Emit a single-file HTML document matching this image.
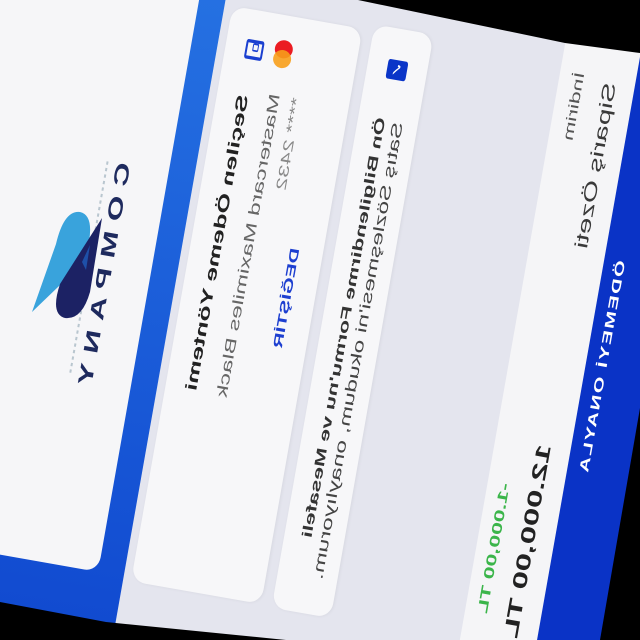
<!DOCTYPE html>
<html><head><meta charset="utf-8"><style>
html,body{margin:0;padding:0;width:640px;height:640px;overflow:hidden;background:#000;font-family:"Liberation Sans",sans-serif;}
#wrap{position:fixed;left:0;top:0;width:640px;height:640px;overflow:hidden;contain:paint;background:#000;}
#pg{position:absolute;left:0;top:0;width:0;height:0;transform-origin:0 0;transform:matrix(-0.287,1.625,0.985,0.174,0,0);}
#pg div{position:absolute;white-space:nowrap;}
</style></head><body>
<div id="wrap">
<div id="pg">
  <div style="left:-121px;top:-100px;width:600px;height:900px;background:#e4e5ee"></div>
  <div style="left:-121px;top:-100px;width:600px;height:322px;background:linear-gradient(90deg,#2a7ae6,#0b3fcb)"></div>
  <div style="left:-121px;top:-100px;width:452px;height:296px;border-radius:9px/14px;background:#f6f6f8"></div>
  <div style="left:84px;top:140px;font-size:20px;letter-spacing:6px;color:#1e2a5e;font-weight:bold">COMPANY</div>
  <div style="left:85px;top:133px;width:130px;height:0;border-top:2px dotted #b9c6cf"></div>

  <div style="left:-21px;top:230px;width:354px;height:132px;border-radius:9px/14px;background:#f7f7f9;box-shadow:0 1px 3px rgba(0,0,0,.06)">
    <div style="left:18px;top:20px;width:8px;height:14px;border:2px solid #1a3fd0;border-radius:2px"></div>
    <div style="left:20px;top:27px;width:3px;height:4px;border:1.5px solid #1a3fd0;border-radius:1px"></div>
    <div style="left:15px;top:49px;width:11px;height:18px;border-radius:50%;background:#eb1c22"></div>
    <div style="left:21px;top:49px;width:11px;height:18px;border-radius:50%;background:#f79e1b;opacity:.9"></div>
    <div style="left:52px;top:18px;font-size:16px;font-weight:bold;color:#222">Seçilen Ödeme Yöntemi</div>
    <div style="left:48px;top:49px;font-size:15px;color:#666">Mastercard Maximiles Black</div>
    <div style="left:48px;top:71px;font-size:14px;color:#888">**** 2432</div>
    <div style="left:138px;top:96px;font-size:13px;font-weight:bold;color:#1d3fd0">DEĞİŞTİR</div>
  </div>

  <div style="left:-25px;top:373px;width:359px;height:60px;border-radius:9px/14px;background:#f7f7f9;box-shadow:0 1px 3px rgba(0,0,0,.06)">
    <div style="left:19px;top:20px;width:12px;height:20px;border-radius:2px;background:#0a35c8;color:#fff;font-size:12px;line-height:20px;text-align:center">✓</div>
    <div style="left:55px;top:14px;font-size:14px;font-weight:bold;color:#333">Ön Bilgilendirme Formu'nu ve Mesafeli</div>
    <div style="left:56px;top:32px;font-size:15px;color:#444">Satış Sözleşmesi'ni okudum, onaylıyorum.</div>
  </div>

  <div style="left:-121px;top:564px;width:600px;height:80px;background:#f5f5f7"></div>
  <div style="left:-18px;top:575px;font-size:14px;color:#555">İndirim</div>
  <div style="left:235px;top:573px;font-size:14px;font-weight:bold;color:#3bb54a">-1.000,00 TL</div>
  <div style="left:-15px;top:605px;font-size:18px;color:#3a3a3a">Sipariş Özeti</div>
  <div style="left:208px;top:603px;font-size:20px;font-weight:bold;color:#222">12.000,00 TL</div>
  <div style="left:-121px;top:640px;width:600px;height:80px;background:#0a33c6"></div>
  <div style="left:90px;top:649px;font-size:13px;font-weight:bold;color:#fff;letter-spacing:1px">ÖDEMEYİ ONAYLA</div>
</div>
<svg width="640" height="640" style="position:absolute;left:0;top:0">
  <path d="M32,312 L56,244 Q64,210 80,212 Q98,216 84,262 Z" fill="#39a3dc"/>
  <path d="M102,218 L90,292 Q82,320 65,318 Q50,314 60,284 Z" fill="#1c2264"/>
  <path d="M82,262 L90,245 L86,270 Z" fill="#1f6fd6" opacity="0.6"/>
  <polygon points="358,0 565,43 640,53 640,0" fill="#000"/>
  <polygon points="640,408 600,640 640,640" fill="#000"/>
  <polygon points="0,602 106,622 286,640 0,640" fill="#000"/>
</svg>
</div>
</body></html>
